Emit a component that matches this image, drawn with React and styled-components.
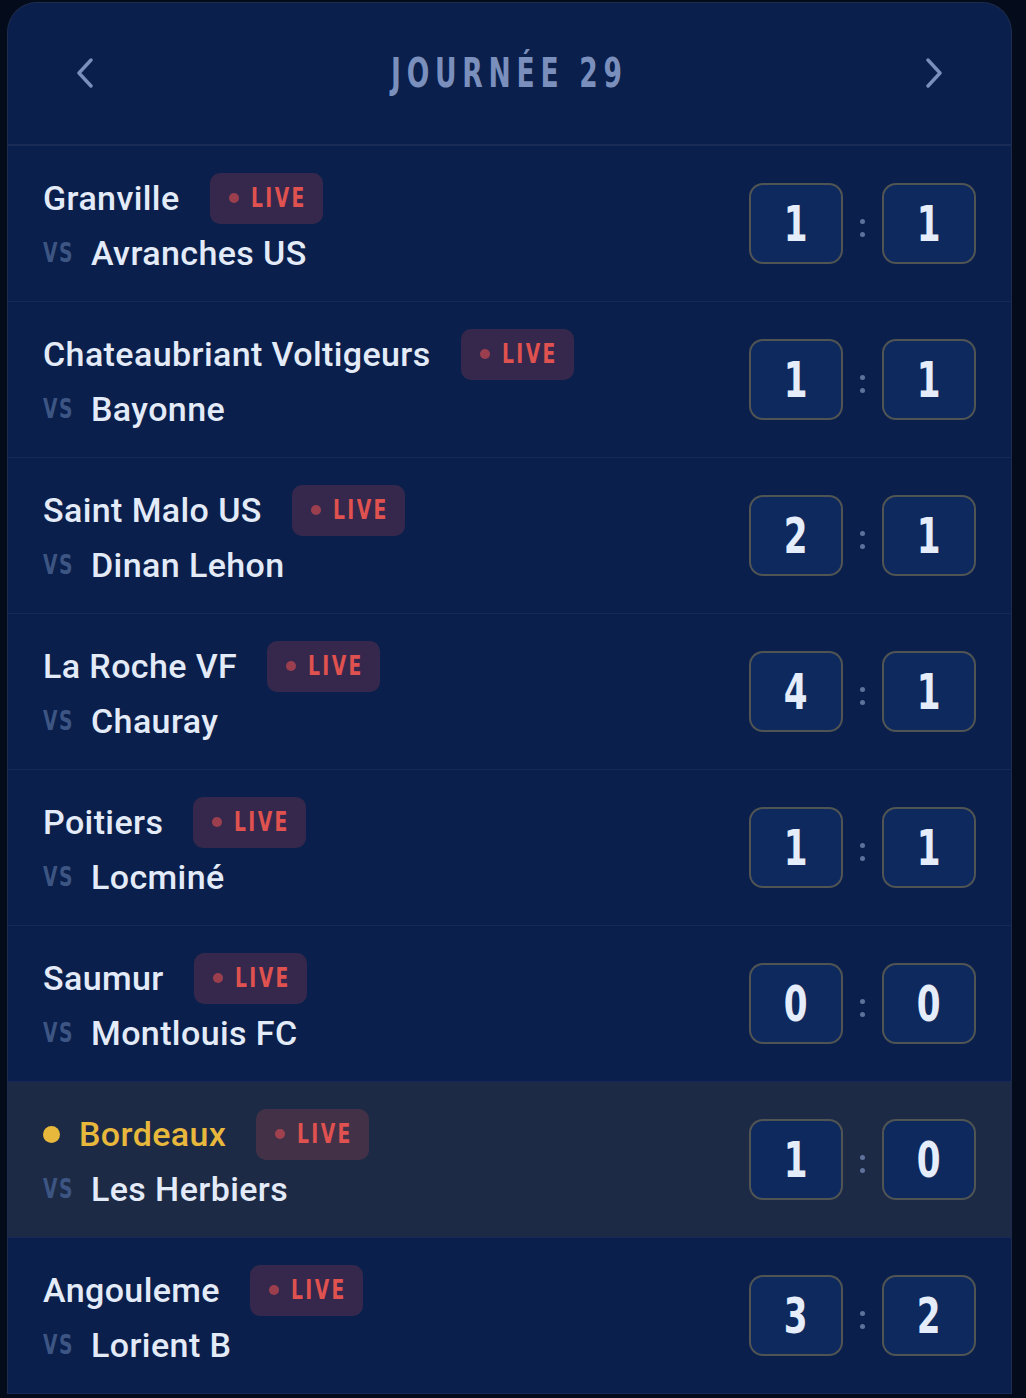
import React from "react";
import styled, { createGlobalStyle } from "styled-components";

const GlobalStyle = createGlobalStyle`
  html, body { margin: 0; padding: 0; background: #040b1a; }
  body { font-family: Roboto, "Noto Sans", sans-serif; }
`;

const CONDENSED = `"Liberation Sans Narrow", "DejaVu Sans Condensed", "Liberation Sans", sans-serif`;

const Page = styled.div`
  padding: 2px 14px 0 7px;
  height: 1396px;
  overflow: hidden;
`;

const Card = styled.div`
  background: #0a1f4b;
  border: 1px solid #1d2c4d;
  border-bottom: none;
  border-radius: 30px 30px 0 0;
  overflow: hidden;
`;

const Header = styled.div`
  height: 141px;
  display: grid;
  grid-template-columns: auto 1fr auto;
  align-items: center;
  padding: 0 68px;
  border-bottom: 2px solid #1a2c55;
`;

const NavButton = styled.button`
  background: none;
  border: none;
  padding: 0;
  width: 18px;
  height: 30px;
  display: flex;
  align-items: center;
  justify-content: center;
  cursor: pointer;
  margin-top: -2px;
`;

const Title = styled.h1`
  margin: 0;
  text-align: center;
  font-family: ${CONDENSED};
  font-weight: 700;
  font-size: 41px;
  letter-spacing: 8px;
  color: #7b8fbd;
  line-height: 1;
  span {
    display: inline-block;
    transform: scaleX(0.72);
  }
`;

const Row = styled.div`
  height: 155px;
  border-bottom: 1px solid #17295a;
  padding: 0 35px;
  display: flex;
  align-items: center;
  justify-content: space-between;
  background: ${(p) => (p.$highlight ? "#1c2a46" : "transparent")};
`;

const Teams = styled.div`
  display: flex;
  flex-direction: column;
  gap: 9px;
  margin-top: -2px;
`;

const HomeLine = styled.div`
  display: flex;
  align-items: center;
  height: 51px;
`;

const HomeDot = styled.span`
  width: 17px;
  height: 17px;
  border-radius: 50%;
  background: #e8b83c;
  margin-right: 19px;
  flex: none;
`;

const TeamName = styled.span`
  font-family: Roboto, "Noto Sans", sans-serif;
  font-weight: 500;
  font-size: 34px;
  letter-spacing: 0.4px;
  line-height: 40px;
  color: ${(p) => (p.$highlight ? "#e8b83c" : "#e4ebf8")};
  white-space: nowrap;
`;

const LiveBadge = styled.span`
  margin-left: 30px;
  height: 51px;
  padding: 0 20px 0 19px;
  border-radius: 10px;
  background: rgba(224, 82, 79, 0.2);
  display: flex;
  align-items: center;
  gap: 12px;
`;

const LiveDot = styled.span`
  width: 10px;
  height: 10px;
  border-radius: 50%;
  background: rgba(210, 75, 82, 0.65);
`;

const LiveText = styled.span`
  font-family: ${CONDENSED};
  font-weight: 700;
  font-size: 26px;
  letter-spacing: 3px;
  color: #e0524f;
  line-height: 1;
  display: inline-block;
  width: 52px;
  transform: scaleX(0.8);
  transform-origin: left center;
  white-space: nowrap;
`;

const AwayLine = styled.div`
  display: flex;
  align-items: center;
  height: 40px;
`;

const Vs = styled.span`
  width: 48px;
  flex: none;
  font-family: ${CONDENSED};
  font-weight: 700;
  font-size: 26px;
  letter-spacing: 2px;
  color: #3d5583;
  line-height: 1;
  display: inline-block;
  transform: scaleX(0.8);
  transform-origin: left center;
`;

const Score = styled.div`
  display: flex;
  align-items: center;
`;

const ScoreBox = styled.div`
  width: 90px;
  height: 77px;
  border: 2px solid rgba(234, 184, 60, 0.3);
  border-radius: 14px;
  background: #0e295e;
  display: flex;
  align-items: center;
  justify-content: center;
  span {
    display: inline-block;
    font-family: ${CONDENSED};
    font-weight: 700;
    font-size: 50px;
    color: #e5ecfa;
    line-height: 1;
    transform: scaleX(0.76);
  }
`;

const Colon = styled.div`
  width: 39px;
  display: flex;
  flex-direction: column;
  align-items: center;
  gap: 8px;
  padding-top: 8px;
  span {
    width: 5px;
    height: 5px;
    border-radius: 50%;
    background: #5f729c;
  }
`;

const Chevron = ({ dir }) => (
  <svg width="18" height="30" viewBox="0 0 18 30" fill="none">
    <polyline
      points={dir === "left" ? "15,2 3,15 15,28" : "3,2 15,15 3,28"}
      stroke="#7b8fbd"
      strokeWidth="3.4"
      strokeLinecap="round"
      strokeLinejoin="round"
    />
  </svg>
);

const matches = [
  { home: "Granville", away: "Avranches US", h: 1, a: 1 },
  { home: "Chateaubriant Voltigeurs", away: "Bayonne", h: 1, a: 1 },
  { home: "Saint Malo US", away: "Dinan Lehon", h: 2, a: 1 },
  { home: "La Roche VF", away: "Chauray", h: 4, a: 1 },
  { home: "Poitiers", away: "Locminé", h: 1, a: 1 },
  { home: "Saumur", away: "Montlouis FC", h: 0, a: 0 },
  { home: "Bordeaux", away: "Les Herbiers", h: 1, a: 0, highlight: true },
  { home: "Angouleme", away: "Lorient B", h: 3, a: 2 },
];

export default function App() {
  return (
    <>
      <GlobalStyle />
      <Page>
        <Card>
          <Header>
            <NavButton aria-label="Précédent">
              <Chevron dir="left" />
            </NavButton>
            <Title>
              <span>JOURNÉE 29</span>
            </Title>
            <NavButton aria-label="Suivant">
              <Chevron dir="right" />
            </NavButton>
          </Header>
          {matches.map((m) => (
            <Row key={m.home} $highlight={m.highlight}>
              <Teams>
                <HomeLine>
                  {m.highlight && <HomeDot />}
                  <TeamName $highlight={m.highlight}>{m.home}</TeamName>
                  <LiveBadge>
                    <LiveDot />
                    <LiveText>LIVE</LiveText>
                  </LiveBadge>
                </HomeLine>
                <AwayLine>
                  <Vs>VS</Vs>
                  <TeamName>{m.away}</TeamName>
                </AwayLine>
              </Teams>
              <Score>
                <ScoreBox>
                  <span>{m.h}</span>
                </ScoreBox>
                <Colon>
                  <span />
                  <span />
                </Colon>
                <ScoreBox>
                  <span>{m.a}</span>
                </ScoreBox>
              </Score>
            </Row>
          ))}
        </Card>
      </Page>
    </>
  );
}
